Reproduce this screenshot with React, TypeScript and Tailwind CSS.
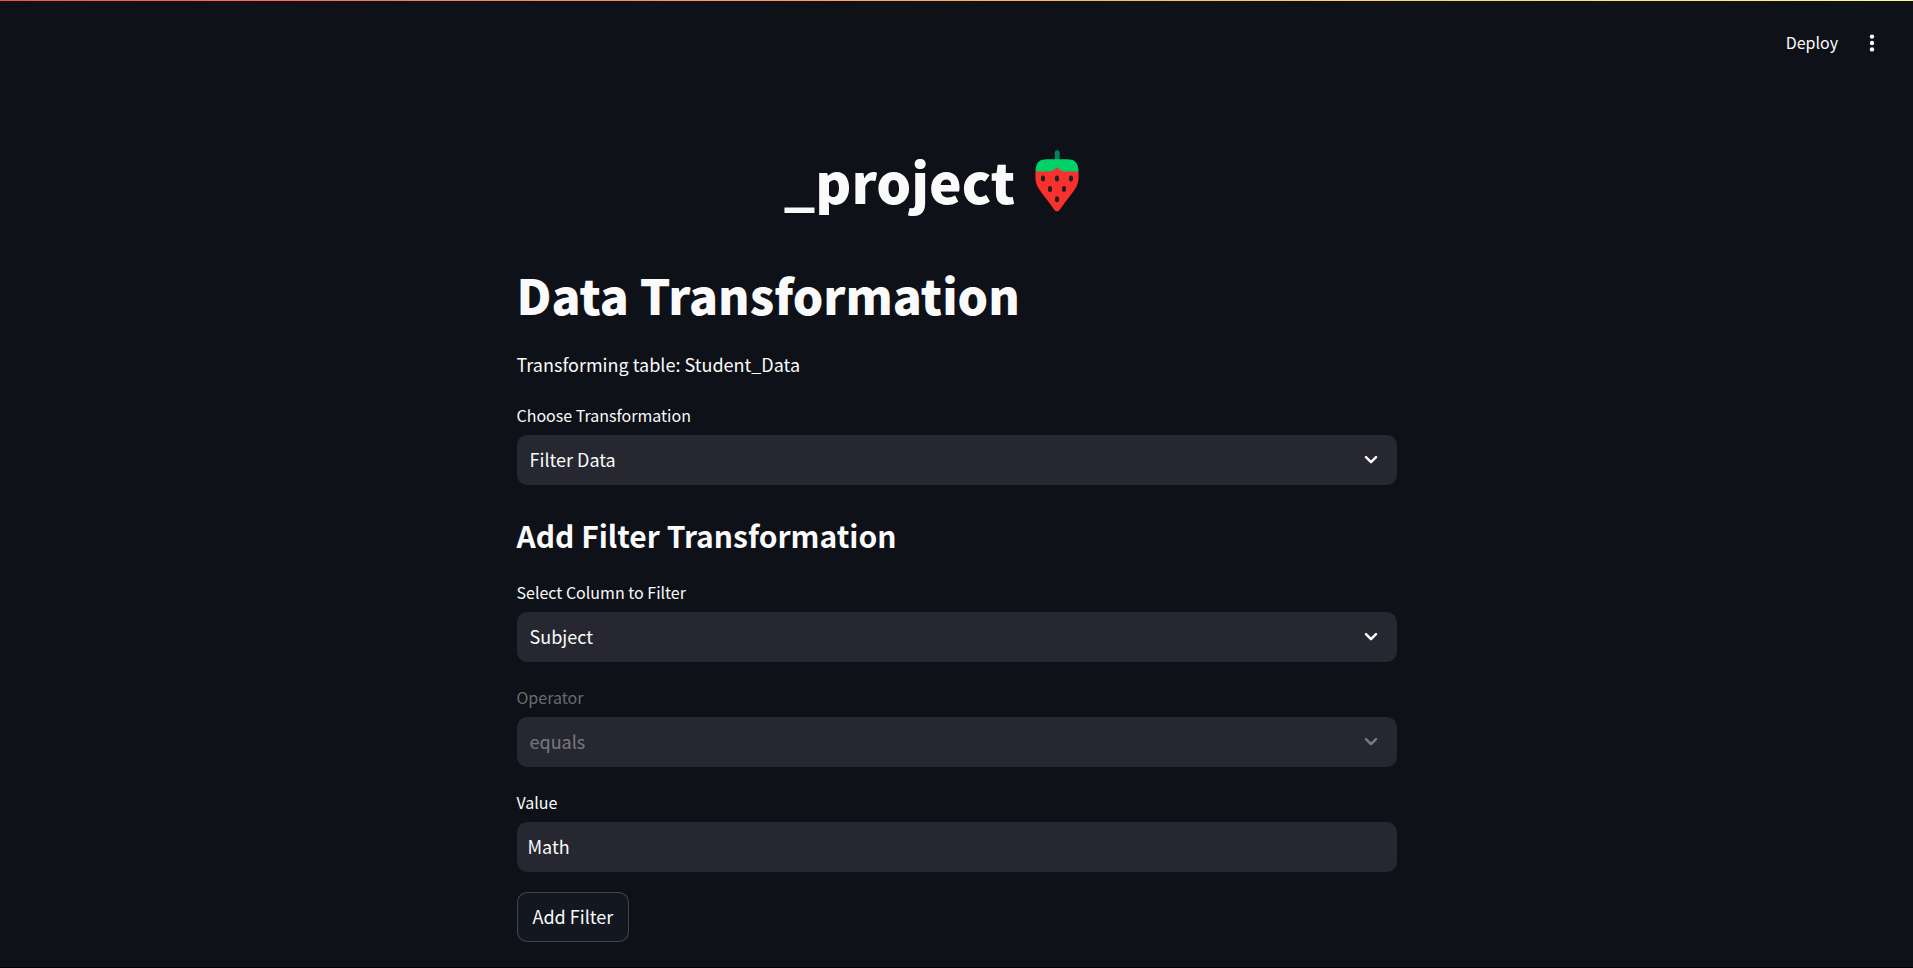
import { useState } from "react";
import type { ReactNode } from "react";

function Strawberry() {
  return (
    <svg viewBox="0 0 44 62" className="h-[62px] w-[44px]" role="img" aria-label="strawberry">
      <path d="M1 19C-.5 27 .5 34 4 39C8 45 14 52 18 58Q22 65 26 58C30 52 36 45 40 39C43.500 34 44.500 27 43 19L34 12H10Z" fill="#f8312f" />
      <path d="M19.800 12V2.600Q19.800 .3 22.200 .3Q24.600 .3 24.600 2.600V12Z" fill="#008463" />
      <path d="M.6 21.500C.6 12 5 9.300 12 9.300H32C39 9.300 43.500 12 43.500 21.500H31C27 21.500 24 19.500 22 17C20 19.500 17 21.500 13 21.500Z" fill="#00d26a" />
      <g fill="#212121">
        <rect x="6" y="25.500" width="4" height="6" rx="1.900" />
        <rect x="20" y="25.500" width="4" height="6" rx="1.900" />
        <rect x="34" y="25.500" width="4" height="6" rx="1.900" />
        <rect x="13" y="36" width="4" height="6" rx="1.900" />
        <rect x="27" y="36" width="4" height="6" rx="1.900" />
        <rect x="20" y="46.200" width="4" height="6" rx="1.900" />
      </g>
    </svg>
  );
}

function Field({ id, label, disabled, children }: { id: string; label: string; disabled?: boolean; children: ReactNode }) {
  return (
    <div className={disabled ? "text-[#fafafa]/40" : "text-[#fafafa]"}>
      <label htmlFor={id} className="mb-[5px] block text-base leading-[30px]">
        {label}
      </label>
      {children}
    </div>
  );
}

function SelectField({ id, label, options, disabled }: { id: string; label: string; options: string[]; disabled?: boolean }) {
  return (
    <Field id={id} label={label} disabled={disabled}>
      <div className="relative">
        <select
          id={id}
          disabled={disabled}
          className="block h-[50px] w-full appearance-none rounded-[10px] bg-[#262730] pr-12 pb-0.5 pl-[13px] text-lg opacity-100 outline-none"
        >
          {options.map((option) => (
            <option key={option}>{option}</option>
          ))}
        </select>
        <svg viewBox="0 0 14 10" className="pointer-events-none absolute top-[20px] right-[19px] h-[10px] w-[14px]" fill="none" stroke="currentColor" strokeWidth="2.500" strokeLinecap="round" strokeLinejoin="round" aria-hidden="true">
          <path d="M2 2.200L7 7.200L12 2.200" />
        </svg>
      </div>
    </Field>
  );
}

export default function App() {
  const [value, setValue] = useState("Math");

  return (
    <div className="flex min-h-screen flex-col border-b border-black bg-[#0e1117] font-['Noto_Sans_CJK_SC','Noto_Sans',sans-serif] text-[#fafafa]">
      <div className="h-px bg-linear-to-r from-[#ff4b4b] to-[#fffd80]" />
      <header className="flex h-[84px] items-center justify-end gap-6 pr-[31px]">
        <button type="button" className="pb-0.5 text-base leading-6">Deploy</button>
        <button type="button" aria-label="Main menu" className="flex w-5 justify-center">
          <svg viewBox="0 0 6 18" className="h-[18px] w-[6px]" fill="currentColor" aria-hidden="true">
            <circle cx="3" cy="2.600" r="2.200" />
            <circle cx="3" cy="9" r="2.200" />
            <circle cx="3" cy="15.400" r="2.200" />
          </svg>
        </button>
      </header>
      <main className="mx-auto w-full max-w-[880px] pt-[58px]">
        <h1 className="flex h-[76px] items-center justify-center gap-5 pr-[50px] text-[55px] leading-[72px] font-black">
          <span className="pb-0.5">_project</span>
          <Strawberry />
        </h1>
        <h2 className="mt-[42px] text-[48px] leading-[66px] font-black">Data Transformation</h2>
        <p className="mt-[21px] text-lg leading-8">Transforming table: Student_Data</p>
        <div className="mt-5">
          <SelectField id="transformation" label="Choose Transformation" options={["Filter Data"]} />
        </div>
        <h3 className="mt-6 mb-4 text-[30px] leading-[52px] font-bold">Add Filter Transformation</h3>
        <form className="flex flex-col items-stretch gap-5" onSubmit={(event) => event.preventDefault()}>
          <SelectField id="column" label="Select Column to Filter" options={["Subject"]} />
          <SelectField id="operator" label="Operator" options={["equals"]} disabled />
          <Field id="value" label="Value">
            <input
              id="value"
              type="text"
              value={value}
              onChange={(event) => setValue(event.target.value)}
              className="block h-[50px] w-full rounded-[10px] bg-[#262730] px-[11px] pb-0.5 text-lg outline-none"
            />
          </Field>
          <button type="submit" className="h-[50px] self-start rounded-[10px] border border-[#fafafa]/20 bg-[#131720] px-[15px] pb-0.5 text-lg">
            Add Filter
          </button>
        </form>
      </main>
    </div>
  );
}
